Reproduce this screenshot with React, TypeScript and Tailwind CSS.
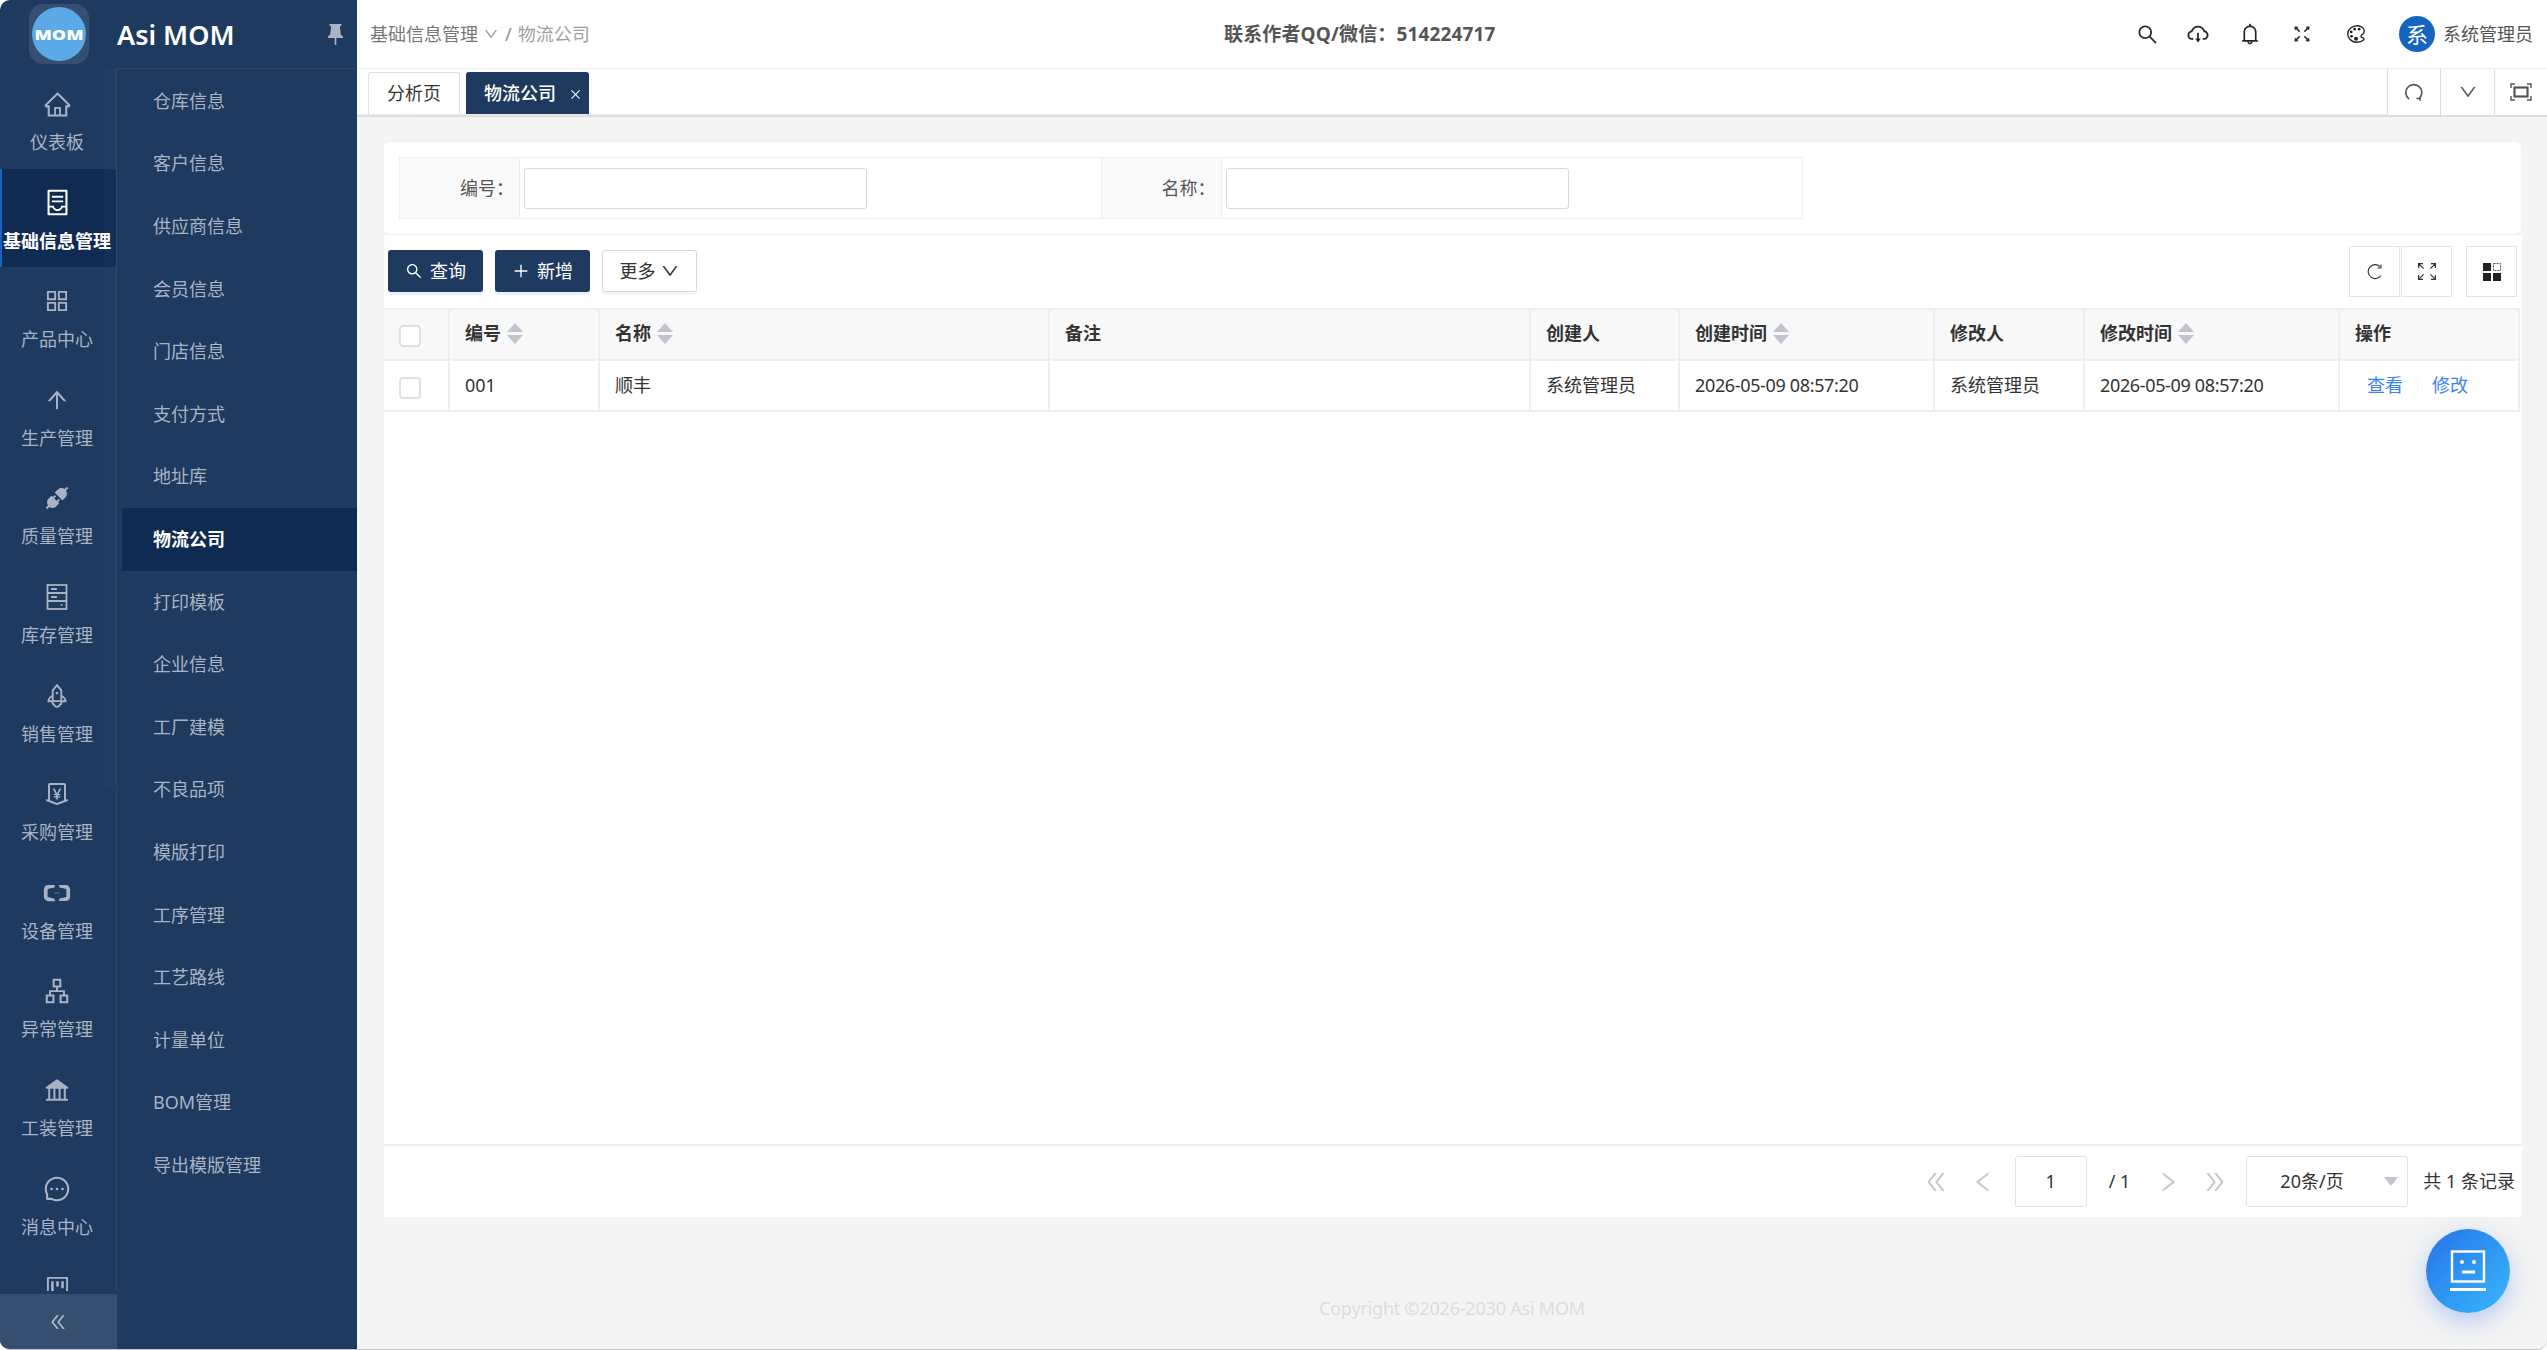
import React from "react";
import {
  AiOutlineHome,
  AiOutlineContainer,
  AiOutlineAppstore,
  AiOutlineArrowUp,
  AiFillApi,
  AiOutlineRocket,
  AiOutlineMoneyCollect,
  AiOutlineAliyun,
  AiOutlineApartment,
  AiFillBank,
  AiOutlineMessage,
  AiOutlineProject,
  AiOutlineSearch,
  AiOutlineCloudDownload,
  AiOutlineBell,
  AiOutlineFullscreen,
  AiOutlineClose,
  AiOutlineDown,
  AiOutlinePlus,
  AiOutlineDoubleLeft,
  AiOutlineDoubleRight,
  AiOutlineLeft,
  AiOutlineRight,
} from "react-icons/ai";
import { IoColorPaletteOutline } from "react-icons/io5";

const font = { fontFamily: '"Noto Sans", "Noto Sans CJK SC", sans-serif' };

function StockIcon() {
  return (
    <svg width="22" height="26" viewBox="0 0 22 26" fill="none" stroke="currentColor" strokeWidth="1.8">
      <rect x="1.5" y="1" width="19" height="24" />
      <path d="M1.5 9h19M1.5 17h19M5 5h6M5 13h6" />
      <circle cx="15.5" cy="21" r="1" fill="currentColor" stroke="none" />
    </svg>
  );
}

function PinIcon() {
  return (
    <svg width="15" height="21" viewBox="0 0 15 21" fill="currentColor">
      <path d="M1.5 0h12v1.5l-1.6 1 .9 8 2.2 2V14H0v-1.5l2.2-2 .9-8-1.6-1z" />
      <rect x="6.7" y="14" width="1.6" height="7" />
    </svg>
  );
}

function TabReload() {
  return (
    <svg width="18" height="18" viewBox="0 0 18 18" fill="none" stroke="currentColor" strokeWidth="1.6">
      <path d="M4 16A8 8 0 1 1 14.5 15.2" />
      <path d="M11.5 15.5h3.5v2.2" />
    </svg>
  );
}

function TabFull() {
  return (
    <svg width="22" height="18" viewBox="0 0 22 18" fill="none" stroke="currentColor" strokeWidth="1.4">
      <path d="M1 5V1h4M17 1h4v4M21 13v4h-4M5 17H1v-4" />
      <rect x="4.5" y="4.5" width="13" height="9" strokeWidth="2.2" />
    </svg>
  );
}

function ToolRefresh() {
  return (
    <svg width="16" height="16" viewBox="0 0 16 16" fill="none" stroke="currentColor" strokeWidth="1.1">
      <path d="M14 11.5A7 7 0 1 1 13 2.5" />
      <path d="M14 .5V4h-3.5" />
    </svg>
  );
}

function ToolExpand() {
  return (
    <svg width="18" height="17" viewBox="0 0 18 17" fill="none" stroke="currentColor" strokeWidth="1.2">
      <path d="M.6 5V.6h4.4M.6.6l5 5M17.4 5V.6H13M17.4.6l-5 5M.6 12v4.4h4.4M.6 16.4l5-5M17.4 12v4.4H13M17.4 16.4l-5-5" />
    </svg>
  );
}

const railItems: { label: string; icon: React.ReactNode; active?: boolean }[] = [
  { label: "仪表板", icon: <AiOutlineHome size={29} /> },
  { label: "基础信息管理", icon: <AiOutlineContainer size={29} />, active: true },
  { label: "产品中心", icon: <AiOutlineAppstore size={28} /> },
  { label: "生产管理", icon: <AiOutlineArrowUp size={26} /> },
  { label: "质量管理", icon: <AiFillApi size={28} /> },
  { label: "库存管理", icon: <StockIcon /> },
  { label: "销售管理", icon: <AiOutlineRocket size={28} /> },
  { label: "采购管理", icon: <AiOutlineMoneyCollect size={28} /> },
  { label: "设备管理", icon: <AiOutlineAliyun size={30} /> },
  { label: "异常管理", icon: <AiOutlineApartment size={28} /> },
  { label: "工装管理", icon: <AiFillBank size={28} /> },
  { label: "消息中心", icon: <AiOutlineMessage size={28} /> },
  { label: "", icon: <AiOutlineProject size={27} /> },
];

const subItems = [
  "仓库信息",
  "客户信息",
  "供应商信息",
  "会员信息",
  "门店信息",
  "支付方式",
  "地址库",
  "物流公司",
  "打印模板",
  "企业信息",
  "工厂建模",
  "不良品项",
  "模版打印",
  "工序管理",
  "工艺路线",
  "计量单位",
  "BOM管理",
  "导出模版管理",
];

const columns = [
  { label: "编号", sort: true },
  { label: "名称", sort: true },
  { label: "备注" },
  { label: "创建人" },
  { label: "创建时间", sort: true },
  { label: "修改人" },
  { label: "修改时间", sort: true },
  { label: "操作" },
];

const row = ["001", "顺丰", "", "系统管理员", "2026-05-09 08:57:20", "系统管理员", "2026-05-09 08:57:20"];

function Sorter() {
  return (
    <span className="ml-[6px] flex flex-col gap-[3px]">
      <span className="h-0 w-0 border-x-[8px] border-b-[9px] border-x-transparent border-b-[#c0c4cc]" />
      <span className="h-0 w-0 border-x-[8px] border-t-[9px] border-x-transparent border-t-[#c0c4cc]" />
    </span>
  );
}

function Checkbox({ className = "" }: { className?: string }) {
  return <span className={`ml-[15px] block h-[22px] w-[22px] rounded-[4px] border-2 border-[#dfe1e8] bg-white ${className}`} />;
}

function Sidebar() {
  return (
    <aside className="flex h-full w-[357px] shrink-0 flex-col bg-[#1e3a5f]">
      <div className="flex h-[68px] shrink-0 items-center">
        <div className="ml-[29px] flex h-[60px] w-[60px] items-center justify-center rounded-[14px] bg-[#354e71]">
          <div className="flex h-[54px] w-[54px] items-center justify-center rounded-full bg-[#5ba9e6] text-[18px] font-black text-white">
            <span className="scale-y-[0.8]">MOM</span>
          </div>
        </div>
        <span className="ml-[28px] text-[27px] font-semibold leading-none text-white">Asi MOM</span>
        <span className="ml-auto mr-[14px] text-[#aab4c4]">
          <PinIcon />
        </span>
      </div>
      <div className="flex min-h-0 flex-1">
        <div className="flex w-[117px] shrink-0 flex-col">
          <div className="relative min-h-0 flex-1 overflow-hidden border-r border-[#2c4669] pt-[2px]">
            {railItems.map((item, i) => (
              <div
                key={i}
                className={`flex h-[98.6px] flex-col items-center pt-[19px] ${
                  item.active ? "border-l-2 border-[#1565c0] bg-[#0f2b52] pr-[4px] text-white" : "pr-[2px] text-[#a9b3c3]"
                }`}
              >
                <span className="flex h-[30px] items-center">{item.icon}</span>
                <span className={`mt-[10px] text-[18px] leading-[26px] whitespace-nowrap ${item.active ? "font-bold" : ""}`}>
                  {item.label}
                </span>
              </div>
            ))}
            <span className="absolute right-0 top-0 h-[720px] w-[12px] rounded-b-[6px] bg-white/[0.02]" />
          </div>
          <div className="mt-[3px] flex h-[55px] shrink-0 items-center justify-center bg-[#364e6f] pr-[2px] text-[#b4bdcb]">
            <AiOutlineDoubleLeft size={20} />
          </div>
        </div>
        <div className="flex-1 border-t border-[#2c4669] pl-[5px] pt-[1px]">
          {subItems.map((name) => (
            <div
              key={name}
              className={`flex h-[62.6px] items-center pl-[31px] text-[18px] ${
                name === "物流公司" ? "bg-[#0f2b52] font-bold text-white" : "text-[#a9b3c3]"
              }`}
            >
              {name}
            </div>
          ))}
        </div>
      </div>
    </aside>
  );
}

function TopBar() {
  return (
    <header className="relative flex h-[69px] shrink-0 items-center border-b border-[#eeeeee] bg-white pl-[13px] pr-[14px]">
      <div className="flex items-center text-[18px] text-[#8c8c8c]">
        <span className="text-[#777777]">基础信息管理</span>
        <AiOutlineDown size={16} className="ml-[5px] text-[#999999]" />
        <span className="mx-[6px]">/</span>
        <span className="text-[#a0a0a0]">物流公司</span>
      </div>
      <div className="absolute left-[867px] text-[19px] font-bold tracking-[0.15px] text-[#555555]">
        联系作者QQ/微信：514224717
      </div>
      <div className="ml-auto flex items-center text-[#262626]">
        <AiOutlineSearch size={23} className="ml-[2px]" />
        <AiOutlineCloudDownload size={24} className="ml-[27px]" />
        <AiOutlineBell size={24} className="ml-[28px]" />
        <AiOutlineFullscreen size={22} className="ml-[29px]" />
        <IoColorPaletteOutline size={22} className="ml-[32px]" />
        <span className="ml-[32px] flex h-[36px] w-[36px] items-center justify-center rounded-full bg-[#1565c0] text-[22px] text-white">
          系
        </span>
        <span className="ml-[8px] text-[18px] text-[#555555]">系统管理员</span>
      </div>
    </header>
  );
}

function TabBar() {
  return (
    <div className="flex h-[48px] shrink-0 border-b-2 border-[#dddddd] bg-white">
      <div className="flex flex-1 items-end gap-[6px] border-b border-[#eeeeee] pl-[11px]">
        <div className="flex h-[42px] w-[92px] items-center justify-center rounded-t-[3px] border border-b-0 border-[#e0e0e0] text-[18px] text-[#333333]">
          分析页
        </div>
        <div className="flex h-[42px] w-[123px] items-center rounded-t-[3px] bg-[#1e3a5f] pl-[18px] text-[18px] font-medium text-white">
          物流公司
          <AiOutlineClose size={13} className="ml-[13px] mt-[2px]" />
        </div>
      </div>
      <div className="flex text-[#555555]">
        <div className="flex w-[53px] items-center justify-center border-l border-[#dddddd]">
          <TabReload />
        </div>
        <div className="flex w-[54px] items-center justify-center border-l border-[#dddddd]">
          <AiOutlineDown size={20} />
        </div>
        <div className="flex w-[53px] items-center justify-center border-l border-[#dddddd]">
          <TabFull />
        </div>
      </div>
    </div>
  );
}

function SearchForm() {
  return (
    <div className="rounded-[6px] border-b border-[#eeeeee] bg-white px-[15px] py-[15px]">
      <div className="flex h-[62px] w-[1404px] border border-[#eeeeee]">
        {["编号：", "名称："].map((label) => (
          <div key={label} className="flex flex-1 border-r border-[#eeeeee] last:border-r-0">
            <div className="flex w-[120px] items-center justify-end border-r border-[#eeeeee] bg-[#fafafa] pr-[5px] text-[18px] text-[#555555]">
              {label}
            </div>
            <div className="flex items-center pl-[4px]">
              <div className="h-[41px] w-[343px] rounded-[3px] border border-[#d9d9d9] bg-white" />
            </div>
          </div>
        ))}
      </div>
    </div>
  );
}

function Toolbar() {
  return (
    <div className="flex h-[73px] items-start justify-between pl-[4px] pr-[5px] pt-[11px]">
      <div className="flex items-start gap-[12px] pt-[4px]">
        <button className="flex h-[42px] w-[95px] items-center justify-center gap-[7px] rounded-[3px] bg-[#1e3a5f] text-[18px] text-white shadow-[0_3px_0_#e6f4ff]">
          <AiOutlineSearch size={18} />
          查询
        </button>
        <button className="flex h-[42px] w-[95px] items-center justify-center gap-[7px] rounded-[3px] bg-[#1e3a5f] text-[18px] text-white shadow-[0_3px_0_#e6f4ff]">
          <AiOutlinePlus size={18} />
          新增
        </button>
        <button className="flex h-[42px] w-[95px] items-center justify-center gap-[4px] rounded-[3px] border border-[#d9d9d9] bg-white text-[18px] text-[#333333] shadow-[0_3px_0_#f5f5f5]">
          更多
          <AiOutlineDown size={20} />
        </button>
      </div>
      <div className="flex gap-px text-[#333333]">
        <div className="flex h-[51px] w-[51px] items-center justify-center border border-[#e2e4ea]">
          <ToolRefresh />
        </div>
        <div className="flex h-[51px] w-[51px] items-center justify-center border border-[#e2e4ea]">
          <ToolExpand />
        </div>
        <div className="ml-[13px] flex h-[51px] w-[51px] items-center justify-center border border-[#e2e4ea]">
          <svg width="18" height="18" viewBox="0 0 18 18">
            <rect x="0" y="0" width="8" height="8" fill="#222222" />
            <rect x="10.5" y="0.5" width="7" height="7" fill="none" stroke="#555555" strokeWidth="1" strokeDasharray="2 1" />
            <rect x="0" y="10" width="8" height="8" fill="#222222" />
            <rect x="10" y="10" width="8" height="8" fill="#222222" />
          </svg>
        </div>
      </div>
    </div>
  );
}

function DataTable() {
  const cell = "flex items-center border-r-2 border-b-2 border-[#eeeeee] pl-[15px] text-[18px]";
  return (
    <div className="min-h-0 flex-1">
      <div className="grid w-[2136px] grid-cols-[66px_150px_450px_481px_149px_255px_150px_255px_180px] grid-rows-[51px_51px] border-t-2 border-[#eeeeee] text-[#333333]">
        <div className="flex items-center border-r-2 border-b-2 border-[#eeeeee] bg-[#f8f8f9]">
          <Checkbox className="mt-[2px]" />
        </div>
        {columns.map((c) => (
          <div key={c.label} className={`${cell} bg-[#f8f8f9] pb-[2px] font-bold text-[#333333]`}>
            {c.label}
            {c.sort && <Sorter />}
          </div>
        ))}
        <div className="flex items-center border-r-2 border-b-2 border-[#eeeeee]">
          <Checkbox className="mt-[4px]" />
        </div>
        {row.map((value, i) => (
          <div key={i} className={`${cell} ${i === 4 || i === 6 ? "tracking-[-0.35px]" : ""}`}>
            {value}
          </div>
        ))}
        <div className={`${cell} pl-[27px] text-[#3b82f6]`}>
          查看
          <span className="mx-[14px] h-[16px] w-px bg-[#f3f3f3]" />
          修改
        </div>
      </div>
    </div>
  );
}

function Pager() {
  return (
    <div className="flex h-[73px] shrink-0 items-center justify-end border-t-2 border-[#eeeeee] pr-[7px] text-[18px] text-[#333333]">
      <AiOutlineDoubleLeft size={26} className="text-[#c8c8c8]" />
      <AiOutlineLeft size={26} className="ml-[21px] text-[#c8c8c8]" />
      <div className="ml-[19px] flex h-[51px] w-[72px] items-center justify-center rounded-[3px] border border-[#dfe1e8]">1</div>
      <span className="ml-[22px]">/ 1</span>
      <AiOutlineRight size={26} className="ml-[25px] text-[#c8c8c8]" />
      <AiOutlineDoubleRight size={26} className="ml-[21px] text-[#c8c8c8]" />
      <div className="relative ml-[18px] flex h-[51px] w-[162px] items-center rounded-[3px] border border-[#dfe1e8] pl-[33px]">
        20条/页
        <span className="absolute right-[9px] top-[20px] h-0 w-0 border-x-[7px] border-t-[9px] border-x-transparent border-t-[#c0c4cc]" />
      </div>
      <span className="ml-[15px]">共 1 条记录</span>
    </div>
  );
}

export default function App() {
  return (
    <div className="flex h-[1350px] w-[2547px] overflow-hidden rounded-[10px] border-b border-[#c8c8c8] bg-[#f4f4f4]" style={font}>
      <Sidebar />
      <main className="relative flex min-w-0 flex-1 flex-col">
        <TopBar />
        <TabBar />
        <div className="flex min-h-0 flex-1 flex-col pl-[27px] pt-[25px]">
          <div className="w-[2137px]">
            <SearchForm />
          </div>
          <section className="flex h-[982px] w-[2138px] shrink-0 flex-col bg-white">
            <Toolbar />
            <DataTable />
            <Pager />
          </section>
          <footer className="mt-[78px] w-[2136px] text-center text-[18px] tracking-[-0.2px] text-[#dddddd]">
            Copyright ©2026-2030 Asi MOM
          </footer>
        </div>
        <div className="absolute left-[2069px] top-[1229px] flex h-[84px] w-[84px] items-center justify-center rounded-full bg-gradient-to-br from-[#2a72e8] to-[#39b8fb] shadow-[0_8px_24px_rgba(60,120,240,0.35)]">
          <svg width="36" height="42" viewBox="0 0 36 42" fill="none" stroke="white" strokeWidth="2.4">
            <rect x="2" y="1.5" width="32" height="30" />
            <circle cx="12" cy="12" r="2" fill="white" stroke="none" />
            <circle cx="24" cy="12" r="2" fill="white" stroke="none" />
            <path d="M12 22h13" strokeWidth="3" />
            <path d="M0 39.5h36" strokeWidth="3" />
          </svg>
        </div>
      </main>
    </div>
  );
}
